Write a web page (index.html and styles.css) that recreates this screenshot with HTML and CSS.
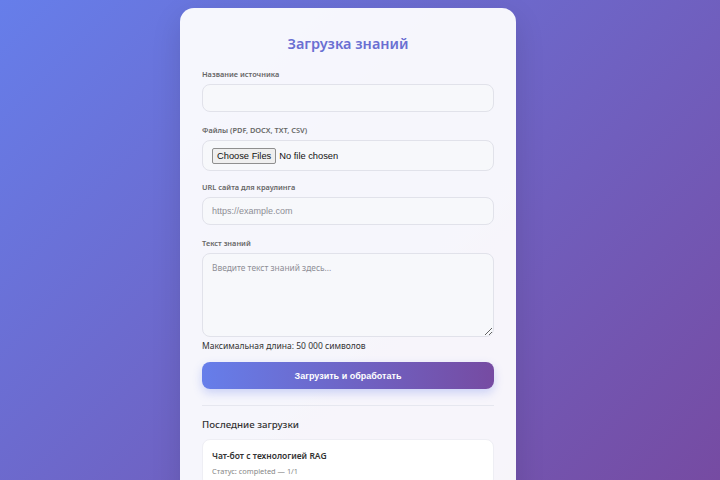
FILE: index.html
```html
<!DOCTYPE html>
<html lang="ru">
<head>
<meta charset="utf-8">
<title>Загрузка знаний</title>
<link rel="stylesheet" href="styles.css">
</head>
<body>
<div class="card">
  <h1 class="title">Загрузка знаний</h1>
  <form class="form">
    <div class="group">
      <label class="label">Название источника</label>
      <input class="field" type="text">
    </div>
    <div class="group">
      <label class="label">Файлы (PDF, DOCX, TXT, CSV)</label>
      <div class="field file-field"><span class="file-btn">Choose Files</span><span class="file-none">No file chosen</span></div>
    </div>
    <div class="group">
      <label class="label">URL сайта для краулинга</label>
      <input class="field url" type="text" placeholder="https://example.com">
    </div>
    <div class="group">
      <label class="label">Текст знаний</label>
      <textarea class="field area" placeholder="Введите текст знаний здесь..."></textarea>
      <div class="hint">Максимальная длина: 50 000 символов</div>
    </div>
    <button class="submit" type="button">Загрузить и обработать</button>
  </form>
  <div class="recent">
    <h2 class="recent-title">Последние загрузки</h2>
    <div class="item">
      <div class="item-name">Чат-бот с технологией RAG</div>
      <div class="item-status">Статус: completed — 1/1</div>
    </div>
  </div>
</div>
</body>
</html>
```
FILE: styles.css
```css
html, body {
  margin: 0;
  height: 100%;
}
body {
  background: linear-gradient(135deg, #667eea 0%, #764ba2 100%);
  font-family: "Noto Sans", "Open Sans", sans-serif;
  color: #333;
  overflow: hidden;
}
.card {
  width: 292px;
  margin: 8px 0 0 180px;
  padding: 22px 22px 40px;
  background: rgba(255, 255, 255, 0.94);
  border-radius: 14px;
  box-shadow: 0 10px 30px rgba(0, 0, 0, 0.12);
  min-height: 500px;
}
.title {
  margin: 1px 0 13px;
  text-align: center;
  font-size: 14.5px;
  line-height: 24px;
  font-weight: 600;
  color: #6a6fd2;
}
.form {
  display: flex;
  flex-direction: column;
}
.group {
  display: flex;
  flex-direction: column;
  margin-bottom: 12px;
}
.label {
  font-size: 7.4px;
  line-height: 12px;
  font-weight: 600;
  color: #666;
  margin-bottom: 4px;
}
.field {
  box-sizing: border-box;
  width: 100%;
  height: 28px;
  border: 1px solid #e1e2ea;
  border-radius: 8px;
  background: #f7f8fb;
  padding: 0 9px;
  font-family: "Liberation Sans", Arial, sans-serif;
  font-size: 9px;
  color: #333;
  outline: none;
}
.field::placeholder {
  color: #8e8e96;
}
.file-field {
  height: 31px;
  display: flex;
  align-items: center;
}
.group:has(.file-field) {
  margin-bottom: 10px;
}
.file-btn {
  font-family: "Liberation Sans", Arial, sans-serif;
  font-size: 9.3px;
  color: #111;
  background: #efefef;
  border: 1px solid #8f8f8f;
  border-radius: 2px;
  padding: 1px 4px;
  line-height: 12px;
  margin-right: 3px;
}
.file-none {
  font-family: "Liberation Sans", Arial, sans-serif;
  font-size: 9.3px;
  color: #111;
}
.area {
  height: 84px;
  padding: 8px 9px;
  font-family: "Noto Sans", "Open Sans", sans-serif;
  font-size: 8.4px;
  resize: vertical;
}
.hint {
  margin-top: 3px;
  font-size: 8.5px;
  line-height: 12px;
  color: #333;
}
.submit {
  margin-top: -2px;
  height: 27px;
  border: none;
  border-radius: 8px;
  background: linear-gradient(90deg, #667eea 0%, #764ba2 100%);
  color: #fff;
  font-family: "Liberation Sans", Arial, sans-serif;
  font-weight: bold;
  font-size: 9px;
  box-shadow: 0 4px 10px rgba(102, 126, 234, 0.3);
}
.recent {
  margin-top: 16px;
  border-top: 1px solid #e6e7ef;
  padding-top: 11px;
}
.recent-title {
  margin: 0 0 6px;
  font-size: 9.7px;
  line-height: 16px;
  font-weight: 500;
  color: #333;
}
.item {
  background: #fff;
  border: 1px solid #eeeef4;
  border-radius: 8px;
  padding: 9px 9px;
}
.item-name {
  font-size: 8.5px;
  line-height: 14px;
  font-weight: 600;
  color: #333;
  margin-bottom: 2px;
}
.item-status {
  font-size: 7.4px;
  line-height: 12px;
  color: #888;
}
```
